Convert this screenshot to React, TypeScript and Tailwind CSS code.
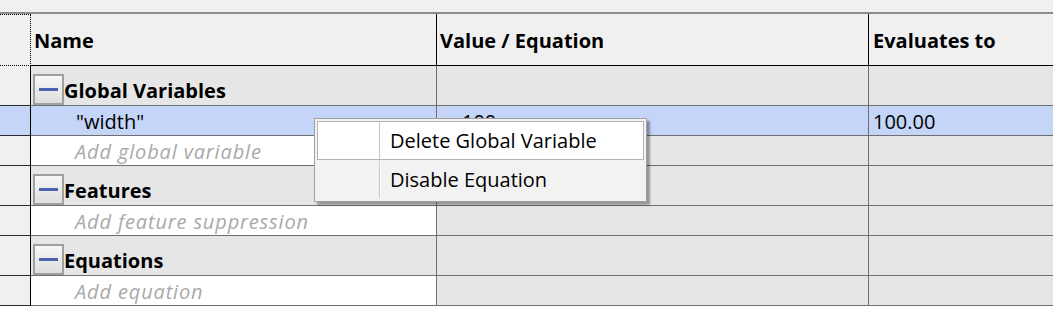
import React from "react";

// Equation manager grid with a right-click menu open on the "width" row

type Row =
  | { kind: "group"; label: string }
  | { kind: "item"; label: string; value?: string; result?: string; selected?: boolean }
  | { kind: "add"; label: string };

const rows: Row[] = [
  { kind: "group", label: "Global Variables" },
  { kind: "item", label: "\"width\"", value: "100", result: "100.00", selected: true },
  { kind: "add", label: "Add global variable" },
  { kind: "group", label: "Features" },
  { kind: "add", label: "Add feature suppression" },
  { kind: "group", label: "Equations" },
  { kind: "add", label: "Add equation" },
];

function MinusBox() {
  return (
    <div className="w-[31px] h-[31px] shrink-0 border-2 border-[#a0a0a0] bg-gradient-to-b from-[#f7f7f7] to-[#dedede] flex items-center justify-center">
      <div className="w-[19px] h-[3px] bg-[#4b62ad]" />
    </div>
  );
}

function GridRow({ row }: { row: Row }) {
  if (row.kind === "group") {
    return (
      <div className="flex h-[40px]">
        <div className="w-[31px] shrink-0 bg-[#f0f0f0] border-r border-b border-r-black border-b-[#2a2a2a]" />
        <div className="w-[406px] shrink-0 bg-[#e6e6e6] border-r border-b border-[#6f6f6f] flex items-end pl-[2px]">
          <MinusBox />
          <span className="font-bold leading-[31px] text-black translate-y-[1px]">{row.label}</span>
        </div>
        <div className="w-[432px] shrink-0 bg-[#e6e6e6] border-r border-b border-[#6f6f6f]" />
        <div className="flex-1 bg-[#e6e6e6] border-b border-[#6f6f6f]" />
      </div>
    );
  }

  if (row.kind === "item") {
    const bg = row.selected ? "bg-[#c4d5f8]" : "bg-white";
    return (
      <div className="flex h-[30px]">
        <div className={`w-[31px] shrink-0 ${bg} border-r border-b border-r-black border-b-[#2a2a2a]`} />
        <div className={`w-[406px] shrink-0 ${bg} border-r border-b border-[#6f6f6f] pl-[45px] pt-[3px] leading-[26px]`}>
          {row.label}
        </div>
        <div className={`w-[432px] shrink-0 ${bg} border-r border-b border-[#6f6f6f] pl-[25px] pt-[3px] leading-[26px]`}>
          {row.value}
        </div>
        <div className={`flex-1 ${bg} border-b border-[#6f6f6f] pl-[4px] pt-[3px] leading-[26px]`}>
          {row.result}
        </div>
      </div>
    );
  }

  return (
    <div className="flex h-[30px]">
      <div className="w-[31px] shrink-0 bg-[#f0f0f0] border-r border-b border-r-black border-b-[#2a2a2a]" />
      <div className="w-[406px] shrink-0 bg-white border-r border-b border-[#6f6f6f] pl-[44px] pt-[3px] leading-[26px] italic tracking-[0.85px] text-[#a9a9a9]">
        {row.label}
      </div>
      <div className="w-[432px] shrink-0 bg-[#e6e6e6] border-r border-b border-[#6f6f6f]" />
      <div className="flex-1 bg-[#e6e6e6] border-b border-[#6f6f6f]" />
    </div>
  );
}

function ContextMenu() {
  const items = ["Delete Global Variable", "Disable Equation"];
  return (
    <div className="absolute left-[314px] top-[118px] w-[333px] h-[84px] bg-[#f2f2f2] border border-[#a0a0a0] p-[2px] shadow-[3px_3px_2px_rgba(0,0,0,0.35)]">
      {items.map((label, i) => (
        <div
          key={label}
          className={`flex h-[39px] ${i === 0 ? "bg-white border border-[#b4b4b4]" : "border border-transparent"}`}
        >
          <div className="w-[62px] shrink-0 border-r border-[#c6c6c6] shadow-[1px_0_0_#ffffff]" />
          <div className="pl-[10px] leading-[37px] text-black">{label}</div>
        </div>
      ))}
    </div>
  );
}

export default function App() {
  return (
    <div
      className="relative w-[1053px] h-[310px] bg-white overflow-hidden text-[20px] text-black"
      style={{ fontFamily: '"Open Sans", "Noto Sans", sans-serif' }}
    >
      <div className="h-[14px] bg-[#f0f0f0] border-b-2 border-[#8c8c8c]" />

      {/* header */}
      <div className="flex h-[52px] bg-[#f0f0f0]">
        <div className="w-[31px] shrink-0 border-t border-r border-b border-dotted border-black" />
        <div className="w-[406px] shrink-0 border-r border-b border-black pl-[3px] pt-[2px] flex items-center font-bold">
          Name
        </div>
        <div className="w-[432px] shrink-0 border-r border-b border-black pl-[3px] pt-[2px] flex items-center font-bold">
          Value / Equation
        </div>
        <div className="flex-1 border-b border-black pl-[4px] pt-[2px] flex items-center font-bold">
          Evaluates to
        </div>
      </div>

      {rows.map((row, i) => (
        <GridRow key={i} row={row} />
      ))}

      <ContextMenu />
    </div>
  );
}
